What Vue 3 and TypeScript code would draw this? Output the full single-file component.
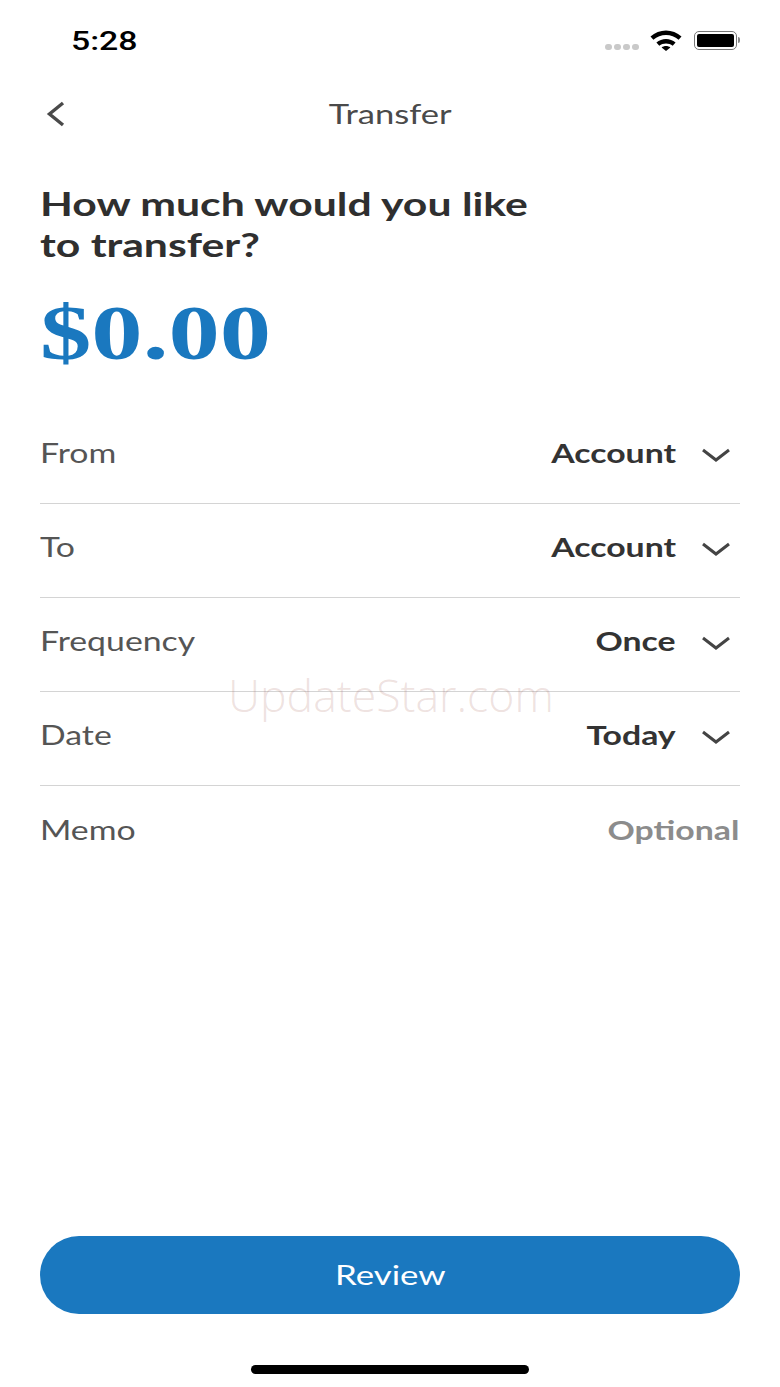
<script setup lang="ts">
interface Row {
  label: string;
  value: string;
  placeholder?: boolean;
}

const rows: Row[] = [
  { label: 'From', value: 'Account' },
  { label: 'To', value: 'Account' },
  { label: 'Frequency', value: 'Once' },
  { label: 'Date', value: 'Today' },
  { label: 'Memo', value: 'Optional', placeholder: true },
];
</script>

<template>
  <div class="screen">
    <div class="status-bar">
      <span class="wide time">5:28</span>
      <div class="status-icons">
        <div class="signal"><i></i><i></i><i></i><i></i></div>
        <svg class="wifi" width="34" height="22" viewBox="0 0 34 22">
          <path d="M1.5 7.5C10 -0.5 24 -0.5 32.5 7.5L29.6 10.8C22.6 4.4 11.4 4.4 4.4 10.8Z" fill="#000" />
          <path d="M7.4 13.6C12.8 8.8 21.2 8.8 26.6 13.6L23.7 16.8C20 13.6 14 13.6 10.3 16.8Z" fill="#000" />
          <path d="M12.6 18.4C15 16.4 19 16.4 21.4 18.4L17 22Z" fill="#000" />
        </svg>
        <div class="battery"><div class="battery-fill"></div></div>
        <div class="battery-cap"></div>
      </div>
    </div>

    <div class="nav">
      <svg class="back" width="20" height="26" viewBox="0 0 20 26">
        <path d="M17 2L3.5 13L17 24" fill="none" stroke="#4a4a4a" stroke-width="3.4" />
      </svg>
      <span class="wide title">Transfer</span>
    </div>

    <h1 class="question"><span class="wide">How much would you like</span><br /><span class="wide">to transfer?</span></h1>
    <div class="amount"><span class="wide">$0.00</span></div>

    <div class="rows">
      <div v-for="row in rows" :key="row.label" class="row">
        <span class="wide label">{{ row.label }}</span>
        <div class="value-wrap">
          <span class="wide-right value" :class="{ placeholder: row.placeholder }">{{ row.value }}</span>
          <svg v-if="!row.placeholder" class="chevron" width="30" height="16" viewBox="0 0 30 16">
            <path d="M2 3L15 13L28 3" fill="none" stroke="#444" stroke-width="3" />
          </svg>
        </div>
      </div>
    </div>

    <div class="watermark">UpdateStar.com</div>

    <button class="review" type="button"><span class="wide-center">Review</span></button>
    <div class="home-bar"></div>
  </div>
</template>

<style>
html,
body {
  margin: 0;
  background: #fff;
}
</style>

<style scoped>
.screen {
  position: relative;
  width: 780px;
  height: 1387px;
  box-sizing: border-box;
  padding: 0 40px;
  display: flex;
  flex-direction: column;
  overflow: hidden;
  background: #fff;
  font-family: Lato, "Open Sans", sans-serif;
}

/* the source shot is stretched sideways, so all text gets the same stretch */
.wide,
.wide-right,
.wide-center {
  display: inline-block;
  white-space: nowrap;
  transform: scaleX(1.3);
}

.wide {
  transform-origin: left center;
}

.wide-right {
  transform-origin: right center;
}

.wide-center {
  transform-origin: center;
}

.status-bar {
  height: 80px;
  display: flex;
  align-items: center;
  justify-content: space-between;
  padding-left: 31px;
}

.time {
  margin-top: 2px;
  font-family: Roboto, sans-serif;
  font-size: 26px;
  font-weight: 500;
  color: #000;
}

.status-icons {
  display: flex;
  align-items: center;
}

.signal {
  display: flex;
  gap: 2px;
  margin-right: 10px;
  margin-top: 14px;
}

.signal i {
  width: 7px;
  height: 6px;
  border-radius: 3px;
  background: #c9c9c9;
}

.wifi {
  margin-right: 11px;
}

.battery {
  width: 43px;
  height: 19px;
  box-sizing: border-box;
  border: 1.5px solid #777;
  border-radius: 5px;
  padding: 2px;
}

.battery-fill {
  height: 100%;
  background: #000;
  border-radius: 2px;
}

.battery-cap {
  width: 2px;
  height: 6px;
  margin-left: 1px;
  background: #888;
  border-radius: 0 2px 2px 0;
}

.nav {
  position: relative;
  height: 68px;
  display: flex;
  align-items: center;
  justify-content: center;
}

.back {
  position: absolute;
  left: 6px;
  top: 21px;
}

.title {
  font-size: 26px;
  color: #4a4a4a;
  transform: scaleX(1.33);
  transform-origin: center;
}

.question {
  margin: 35px 0 0;
  font-size: 32px;
  line-height: 41px;
  font-weight: 700;
  color: #2f2f2f;
}

.question .wide {
  transform: scaleX(1.335);
}

.amount {
  margin-top: 23px;
  font-family: "Liberation Serif", serif;
  font-size: 79px;
  line-height: 90px;
  font-weight: 700;
  color: #1a78bf;
}

.rows {
  margin-top: 32px;
}

.row {
  height: 94px;
  box-sizing: border-box;
  padding-bottom: 7px;
  display: flex;
  align-items: center;
  justify-content: space-between;
  border-bottom: 1px solid #d4d4d4;
}

.row:last-child {
  border-bottom: none;
}

.label {
  font-size: 26px;
  color: #555;
}

.value-wrap {
  display: flex;
  align-items: center;
}

.value {
  font-size: 26px;
  font-weight: 700;
  color: #333;
}

.value.placeholder {
  margin-right: 1px;
  color: #8c8c8c;
}

.chevron {
  margin: 3px 9px 0 25px;
}

.watermark {
  position: absolute;
  left: 228px;
  top: 667px;
  font-family: "Open Sans", sans-serif;
  font-size: 44.6px;
  font-weight: 300;
  line-height: 56px;
  color: rgba(170, 110, 100, 0.2);
}

.review {
  margin-top: auto;
  width: 700px;
  height: 78px;
  border: none;
  border-radius: 39px;
  background: #1a78bf;
  color: #fff;
  font-family: Lato, sans-serif;
  font-size: 26px;
}

.review .wide-center {
  transform: scaleX(1.34);
}

.home-bar {
  width: 278px;
  height: 9px;
  margin: 51px auto 13px;
  border-radius: 5px;
  background: #000;
}
</style>
